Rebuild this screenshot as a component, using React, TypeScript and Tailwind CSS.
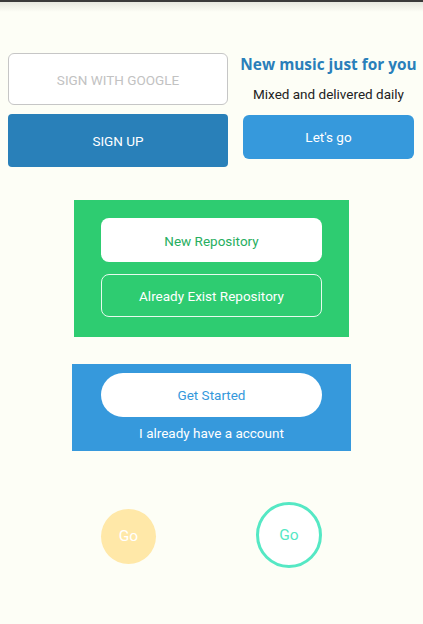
import React from "react";

export default function App() {
  const roboto = { fontFamily: "Roboto, 'Liberation Sans', sans-serif" };
  return (
    <div className="min-h-[624px] w-[423px] bg-[#fdfef6]" style={roboto}>
      <div className="h-[2px] bg-[#3a3a3a]" />
      <div className="h-[10px] bg-gradient-to-b from-[#e6e7df] to-[#fdfef6]" />
      <div className="mt-[41px] flex pl-[8px]">
        <div className="flex w-[220px] flex-col">
          <div className="flex h-[52px] items-center justify-center rounded-[6px] border border-[#c6c6c6] bg-white pt-[2px] text-[13.5px] text-[#c2c2c2]">
            SIGN WITH GOOGLE
          </div>
          <div className="mt-[9px] flex h-[53px] items-center justify-center rounded-[4px] bg-[#2980b9] pt-[2px] text-[13.5px] text-white">
            SIGN UP
          </div>
        </div>
        <div className="ml-[15px] flex w-[171px] flex-col">
          <div
            className="flex h-[24px] items-center justify-center whitespace-nowrap text-[15.4px] font-bold text-[#2a7fba]"
            style={{ fontFamily: "'Open Sans', sans-serif" }}
          >
            New music just for you
          </div>
          <div className="mt-[7px] flex h-[20px] items-center justify-center whitespace-nowrap text-[13.5px] text-[#222]">
            Mixed and delivered daily
          </div>
          <div className="mt-[11px] flex h-[44px] items-center justify-center rounded-[6px] bg-[#3699dc] pt-[1px] text-[13.5px] text-white">
            Let's go
          </div>
        </div>
      </div>

      <div className="ml-[74px] mt-[33px] flex w-[275px] flex-col bg-[#2ecc71] px-[27px] pb-[20px] pt-[18px]">
        <div className="flex h-[44px] items-center justify-center rounded-[8px] bg-white pt-[2px] text-[13.5px] text-[#27ae60]">
          New Repository
        </div>
        <div className="mt-[12px] flex h-[43px] items-center justify-center rounded-[8px] border border-[#e6fbee] pt-[1px] text-[13.5px] text-white">
          Already Exist Repository
        </div>
      </div>

      <div className="ml-[72px] mt-[27px] flex h-[87px] w-[279px] flex-col items-center bg-[#3699dc] pt-[9px]">
        <div className="flex h-[44px] w-[221px] items-center justify-center rounded-full bg-white pt-[1px] text-[13.5px] text-[#3498db]">
          Get Started
        </div>
        <div className="mt-[6px] flex h-[20px] items-center justify-center pt-[1px] text-[13.5px] text-white">
          I already have a account
        </div>
      </div>

      <div className="mt-[51px] flex items-center pl-[101px]">
        <div className="mt-[2px] flex h-[55px] w-[55px] items-center justify-center rounded-full bg-[#ffe8a8] pt-[1px] text-[15.5px] text-white">
          Go
        </div>
        <div className="ml-[100px] flex h-[66px] w-[66px] items-center justify-center rounded-full border-[3px] border-[#55e8c4] bg-white pt-[1px] text-[15.5px] text-[#55e8c4]">
          Go
        </div>
      </div>
    </div>
  );
}
